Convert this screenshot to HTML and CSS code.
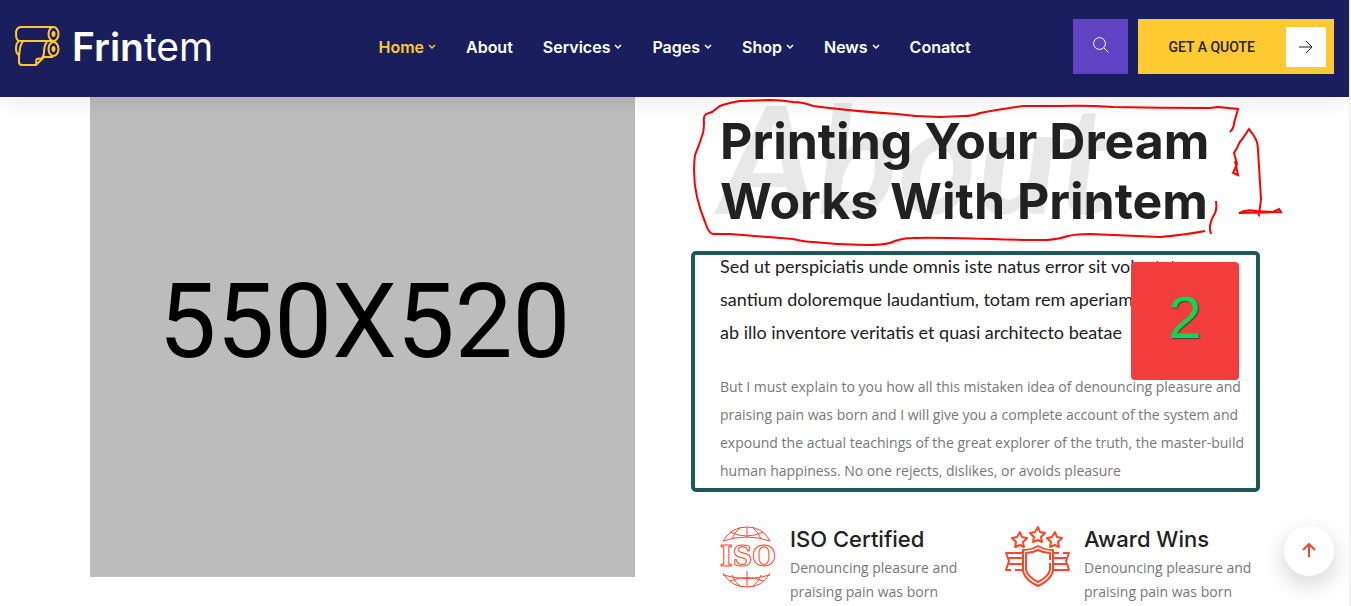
FILE: index.html
```html
<!DOCTYPE html>
<html lang="en">
<head>
<meta charset="utf-8">
<meta name="viewport" content="width=device-width, initial-scale=1">
<title>Frintem</title>
<link rel="stylesheet" href="styles.css">
</head>
<body>
<header class="header">
  <a class="logo" href="#" aria-label="Frintem home">
    <svg class="logo-mark" viewBox="0 0 45 41" aria-hidden="true">
      <path d="M38 1H6C2.500 1 1 4 1 8s1.500 7 4 7h32"/>
      <ellipse cx="38.500" cy="8" rx="5" ry="7"/>
      <ellipse cx="38.500" cy="23" rx="5" ry="7"/>
      <path d="M4 15C0 18 0 27 4 29M8 16c-4 3-3 9-4 14v6c0 2 1 3 3 3h14l8-8h9M32 16c-5 5-1 12-5 16"/>
      <path d="M21 39c1-2-1-5 1-6s4 0 5-1"/>
      <ellipse class="core" cx="38.500" cy="8" rx="1" ry="2"/>
      <ellipse class="core" cx="38.500" cy="23" rx="1" ry="2"/>
    </svg>
    <span class="logo-text"><b>Frin</b>tem</span>
  </a>
  <nav class="nav" aria-label="Main">
    <a class="active" href="#">Home <svg viewBox="0 0 8 6"><path d="M1 1l3 3 3-3"/></svg></a>
    <a href="#">About</a>
    <a href="#">Services <svg viewBox="0 0 8 6"><path d="M1 1l3 3 3-3"/></svg></a>
    <a href="#">Pages <svg viewBox="0 0 8 6"><path d="M1 1l3 3 3-3"/></svg></a>
    <a href="#">Shop <svg viewBox="0 0 8 6"><path d="M1 1l3 3 3-3"/></svg></a>
    <a href="#">News <svg viewBox="0 0 8 6"><path d="M1 1l3 3 3-3"/></svg></a>
    <a href="#">Conatct</a>
  </nav>
  <div class="actions">
    <button class="search" type="button" aria-label="Search"><svg viewBox="0 0 16 16"><circle cx="6.500" cy="6.500" r="5.900"/><path d="M10.700 10.700l4.800 4.800"/></svg></button>
    <a class="quote" href="#">GET A QUOTE <span class="quote-arrow"><svg viewBox="0 0 14 14"><path d="M0 7h13M7 1l6 6-6 6"/></svg></span></a>
  </div>
</header>

<main class="about">
  <div class="photo" role="img" aria-label="550X520">550X520</div>
  <section class="content">
    <div class="title-wrap">
      <span class="watermark" aria-hidden="true">About</span>
      <h2 class="title">Printing Your Dream<br>Works With Printem</h2>
      <svg class="scribble" viewBox="690 97 600 150" aria-hidden="true">
        <path d="M1230 132Q1234 128 1234 123L1238 109L1218 107L1210 108Q1160 108 1113 107Q1085 105 1060 106L1023 106Q1000 109 980 113Q974 116 963 116L940 117Q918 117 897 114Q850 111 813 106Q803 102 793 102Q781 100 770 100L740 101Q728 103 720 106L712 112L706 114Q703 117 704 122Q704 129 703 133Q700 143 695 155Q694 162 694 170Q694 184 697 197Q700 210 705 222Q709 234 713 234L730 234L793 239Q805 242 813 242Q840 245 867 245Q882 245 890 243Q901 238 913 238Q930 237 990 239Q1025 240 1047 240Q1059 239 1068 236Q1077 234 1090 234L1160 237Q1184 235 1205 231"/>
        <path d="M1216 201Q1217 209 1215 213Q1209 223 1210 230L1211 234"/>
        <path d="M1235 161L1238 175L1233 173L1237 164L1234 153L1237 148Q1239 142 1243 138L1249 129L1254 136Q1258 142 1258 150L1261 199L1259 215L1256 211Q1246 209 1239 213L1281 212L1279 209L1273 212L1256 211"/>
      </svg>
    </div>
    <div class="copy">
      <p class="lead">Sed ut perspiciatis unde omnis iste natus error sit voluptatem<br>santium doloremque laudantium, totam rem aperiam, eaque ipsae<br>ab illo inventore veritatis et quasi architecto beatae</p>
      <p class="text">But I must explain to you how all this mistaken idea of denouncing pleasure and<br>praising pain was born and I will give you a complete account of the system and<br>expound the actual teachings of the great explorer of the truth, the master-build<br>human happiness. No one rejects, dislikes, or avoids pleasure</p>
      <div class="frame"></div>
      <div class="marker">2</div>
    </div>
    <div class="features">
      <article class="feature">
        <svg class="iso" viewBox="0 0 56 62" aria-hidden="true">
          <path d="M3 15Q11 1 27 1T50 15M3 15Q27 7 50 15M10 6Q27 14 43 6M27 1v10M21 1Q14 6 12 13M32 1Q39 6 41 13M3 47Q11 61 27 61T50 47M3 49Q27 56 50 49M10 55Q27 48 43 55M27 45v16M21 61Q14 56 12 49M32 61Q39 56 41 49"/>
          <text x="0" y="40">ISO</text>
        </svg>
        <div><h3>ISO Certified</h3><p>Denouncing pleasure and<br>praising pain was born</p></div>
      </article>
      <article class="feature">
        <svg class="award" viewBox="0 0 65 62" aria-hidden="true">
          <path d="M33 20q7 4 15 4v21q-2 9-15 15q-13-6-15-15V24q8 0 15-4zM45 34v-7q-6 0-12-3q-6 3-12 3v17q2 7 12 12q10-5 12-12v-7"/>
          <path d="M18 27H1l3 8-3 9h5M10 44h8M2 32h16M4 38h14M48 27h6M58 27h6l-3 8 3 9H48M48 32h15M48 38h13"/>
          <path id="star" d="M33 1l2 5 5 1-4 4 1 5-4-2-5 2 1-5-4-4 5-1z"/>
          <use href="#star" x="-18" y="5"/><use href="#star" x="17" y="5"/>
        </svg>
        <div><h3>Award Wins</h3><p>Denouncing pleasure and<br>praising pain was born</p></div>
      </article>
    </div>
  </section>
</main>
<button class="to-top" type="button" aria-label="Back to top"><svg viewBox="0 0 14 14"><path d="M7 14V1M1 7l6-6 6 6"/></svg></button>
</body>
</html>
```
FILE: styles.css
```css
* { box-sizing: border-box; }

body {
  margin: 0;
  min-height: 100vh;
  border-right: 2px solid #f1f1f1;
  overflow: hidden;
  background: #fff;
  color: #212121;
  font-family: "Open Sans", "Noto Sans", sans-serif;
}

a { color: inherit; text-decoration: none; }
h2, h3, p { margin: 0; }
button { border: 0; padding: 0; cursor: pointer; }
svg { fill: none; stroke: currentColor; flex: none; }

.header {
  position: relative;
  z-index: 2;
  display: flex;
  align-items: center;
  justify-content: space-between;
  height: 97px;
  padding: 0 15px 4px;
  background: #1b1e5c;
  color: #fff;
  box-shadow: 0 6px 20px rgba(0, 0, 0, .08);
}

.logo { display: flex; align-items: center; gap: 12px; flex: 1; }
.logo-mark { width: 45px; height: 41px; color: #ffc931; stroke-width: 2; }
.core { fill: currentColor; }
.logo-text { font: 400 39px/44px Inter, sans-serif; }
.logo-text b { font-weight: 600; }

.nav { display: flex; gap: 30px; font: 600 16px/24px Inter, sans-serif; }
.nav a { display: flex; align-items: center; gap: 4px; }
.nav svg { width: 8px; height: 6px; stroke-width: 1.500; }
.nav .active { color: #ffc931; }

.actions { display: flex; gap: 10px; flex: 1; justify-content: flex-end; }
.search { width: 55px; height: 55px; background: #5e43c3; color: #fff; }
.search svg { width: 16px; height: 16px; }
.quote {
  display: flex;
  align-items: center;
  gap: 31px;
  height: 55px;
  padding: 0 8px 0 30px;
  background: #ffc931;
  color: #212121;
  font: 500 14px/20px Roboto, sans-serif;
}
.quote-arrow { display: grid; place-items: center; width: 40px; height: 40px; background: #fff; }
.quote-arrow svg { width: 14px; height: 14px; }

.about {
  display: grid;
  grid-template-columns: 545fr 539fr;
  align-items: start;
  gap: 85px;
  margin-top: -35px;
  padding: 0 90px;
}
.photo {
  display: grid;
  place-items: center;
  aspect-ratio: 545 / 515;
  padding: 4px 0 0 4px;
  background: #bcbcbc;
  color: #000;
  font: 103px/1 Roboto, sans-serif;
}

.content { padding-top: 49px; white-space: nowrap; }
.title-wrap { position: relative; }
.title { position: relative; font: 700 50px/60px Inter, sans-serif; }
.watermark {
  position: absolute;
  left: 0;
  bottom: -15px;
  color: #e8e8e8;
  font: italic 700 150px/180px Lato, sans-serif;
}
.scribble {
  position: absolute;
  left: -30px;
  top: -14px;
  width: 600px;
  height: 150px;
  color: #f00;
  stroke-width: 2;
}

.copy { position: relative; margin-top: 19px; }
.lead { font: 18px/33px Lato, sans-serif; }
.text { margin-top: 24px; color: #777; font-size: 14px; line-height: 28px; }
.frame {
  position: absolute;
  inset: 1px -1px -7px -29px;
  border: 4px solid #20585a;
  border-radius: 5px;
}
.marker {
  position: absolute;
  top: 12px;
  right: 20px;
  display: grid;
  place-items: center;
  width: 108px;
  height: 118px;
  padding-bottom: 6px;
  border-radius: 4px;
  background: #f33c3c;
  color: #12d651;
  font: 60px/1 "Liberation Sans", Arial, sans-serif;
  text-shadow: 1px 1px 1px #444;
}

.features { display: grid; grid-template-columns: 1fr 1fr; gap: 31px; margin-top: 41px; }
.feature { display: flex; gap: 14px; color: #212121; }
.feature svg { height: 62px; color: #ff4528; stroke-width: 1; }
.feature .iso { width: 56px; }
.iso text { font: 700 27px "DejaVu Serif", serif; }
.feature .award { width: 65px; stroke-width: 2; stroke-linejoin: round; }
.feature h3 { font: 500 22px/26px Inter, sans-serif; }
.feature p { margin-top: 4px; color: #777; font-size: 14px; line-height: 24px; }

.to-top {
  position: fixed;
  right: 17px;
  bottom: 30px;
  width: 50px;
  height: 50px;
  border-radius: 50%;
  background: #fff;
  color: #ff4528;
  box-shadow: 0 8px 24px rgba(0, 0, 0, .18);
}
.to-top svg { width: 14px; height: 14px; stroke-width: 2; }
```
